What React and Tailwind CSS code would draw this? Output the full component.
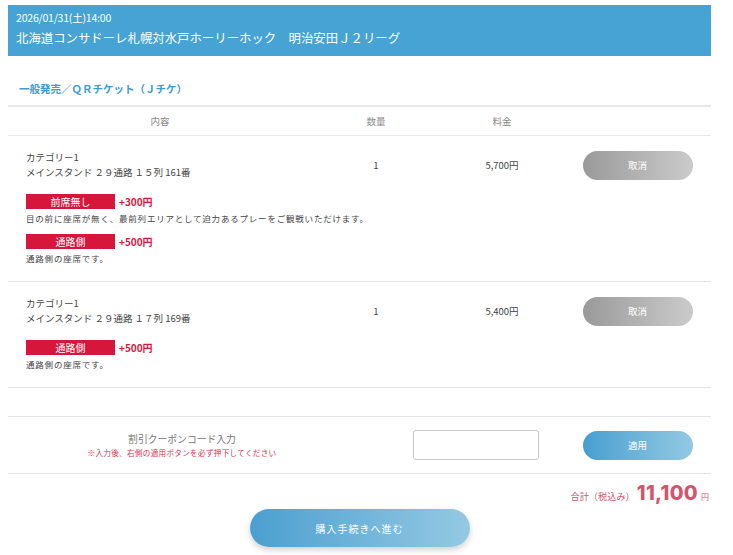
import React from "react";

const jp = "font-['Noto_Sans_CJK_JP','Noto_Sans',sans-serif]";

const items = [
  {
    cat: "カテゴリー1",
    seat: "メインスタンド ２９通路 １５列 161番",
    qty: "1",
    price: "5,700円",
    options: [
      { label: "前席無し", add: "+300円", desc: "目の前に座席が無く、最前列エリアとして迫力あるプレーをご観戦いただけます。" },
      { label: "通路側", add: "+500円", desc: "通路側の座席です。" },
    ],
  },
  {
    cat: "カテゴリー1",
    seat: "メインスタンド ２９通路 １７列 169番",
    qty: "1",
    price: "5,400円",
    options: [{ label: "通路側", add: "+500円", desc: "通路側の座席です。" }],
  },
];

function Option({ o, first }) {
  return (
    <div className={first ? "mt-[14px]" : "mt-[9px]"}>
      <div className="flex items-center">
        <span className="flex h-[15px] w-[89px] items-center justify-center bg-[#d7163c] text-[10px] leading-none text-white">
          {o.label}
        </span>
        <span className="ml-[4px] text-[10px] font-bold leading-none text-[#d7163c]">{o.add}</span>
      </div>
      <p className="mt-[2px] text-[8.5px] leading-[14px] tracking-[0.8px] text-[#444]">{o.desc}</p>
    </div>
  );
}

function Item({ it }) {
  return (
    <div className="border-b border-[#e4e4e4] pb-[16px] pl-[18px] pt-[14px]">
      <div className="flex items-center">
        <div className="w-[286px] text-[9.5px] leading-[15px] text-[#444]">
          <div>{it.cat}</div>
          <div>{it.seat}</div>
        </div>
        <div className="w-[128px] text-center text-[9.5px] text-[#444]">{it.qty}</div>
        <div className="w-[124px] text-center text-[9.5px] text-[#444]">{it.price}</div>
        <div className="flex flex-1 justify-center">
          <button className="h-[29px] w-[110px] rounded-full bg-gradient-to-r from-[#9a9a9a] to-[#cbcbcb] text-[9.5px] text-white">
            取消
          </button>
        </div>
      </div>
      {it.options.map((o, i) => (
        <Option key={i} o={o} first={i === 0} />
      ))}
    </div>
  );
}

export default function App() {
  return (
    <div className={`min-h-[555px] bg-white ${jp}`}>
      <div className="ml-2 w-[703px] pt-[5px]">
        <header className="h-[51px] bg-[#47a3d3] px-2 pt-[6px] text-white">
          <div className="text-[10.5px] leading-[14px] tracking-[-0.2px]">2026/01/31(土)14:00</div>
          <div className="mt-[5px] text-[12.4px] leading-[17px]">北海道コンサドーレ札幌対水戸ホーリーホック　明治安田Ｊ２リーグ</div>
        </header>

        <h2 className="mt-[25px] pl-[11px] text-[10.5px] font-bold leading-[16px] text-[#3c9bd0]">
          一般発売／ＱＲチケット（Ｊチケ）
        </h2>

        <div className="mt-[8px] flex h-[31px] items-center border-b border-t-2 border-[#e8e8e8] text-[9.5px] text-[#888]">
          <div className="w-[304px] text-center">内容</div>
          <div className="w-[128px] text-center">数量</div>
          <div className="w-[124px] text-center">料金</div>
        </div>

        {items.map((it, i) => (
          <Item key={i} it={it} />
        ))}

        <div className="mt-[28px] flex h-[58px] items-center border-b border-t border-[#e4e4e4]">
          <div className="w-[348px] text-center">
            <div className="text-[9.8px] leading-[15px] text-[#777]">割引クーポンコード入力</div>
            <div className="text-[7.6px] leading-[12px] tracking-[0.3px] text-[#d9334f]">※入力後、右側の適用ボタンを必ず押下してください</div>
          </div>
          <div className="flex w-[208px] pl-[57px]">
            <input className="h-[30px] w-[126px] rounded-[3px] border border-[#c8c8c8] bg-white outline-none" />
          </div>
          <div className="flex flex-1 justify-center">
            <button className="h-[29px] w-[110px] rounded-full bg-gradient-to-r from-[#479fd0] to-[#92c9e3] text-[9.5px] text-white">
              適用
            </button>
          </div>
        </div>

        <div className="mt-[7px] flex items-baseline justify-end pr-[2px] text-[#d2556b]">
          <span className="text-[9.2px]">合計（税込み）</span>
          <span className="ml-[2px] font-['Inter',sans-serif] text-[20px] font-extrabold leading-[24px] tracking-[0.3px]">11,100</span>
          <span className="ml-[3px] text-[8px]">円</span>
        </div>

        <div className="mt-[4px] flex justify-center">
          <button className="h-[38px] w-[220px] rounded-full bg-gradient-to-r from-[#4a9fd0] to-[#94c9e3] text-[10px] tracking-[1px] text-white shadow-[0_3px_6px_rgba(0,0,0,0.18)]">
            購入手続きへ進む
          </button>
        </div>
      </div>
    </div>
  );
}
